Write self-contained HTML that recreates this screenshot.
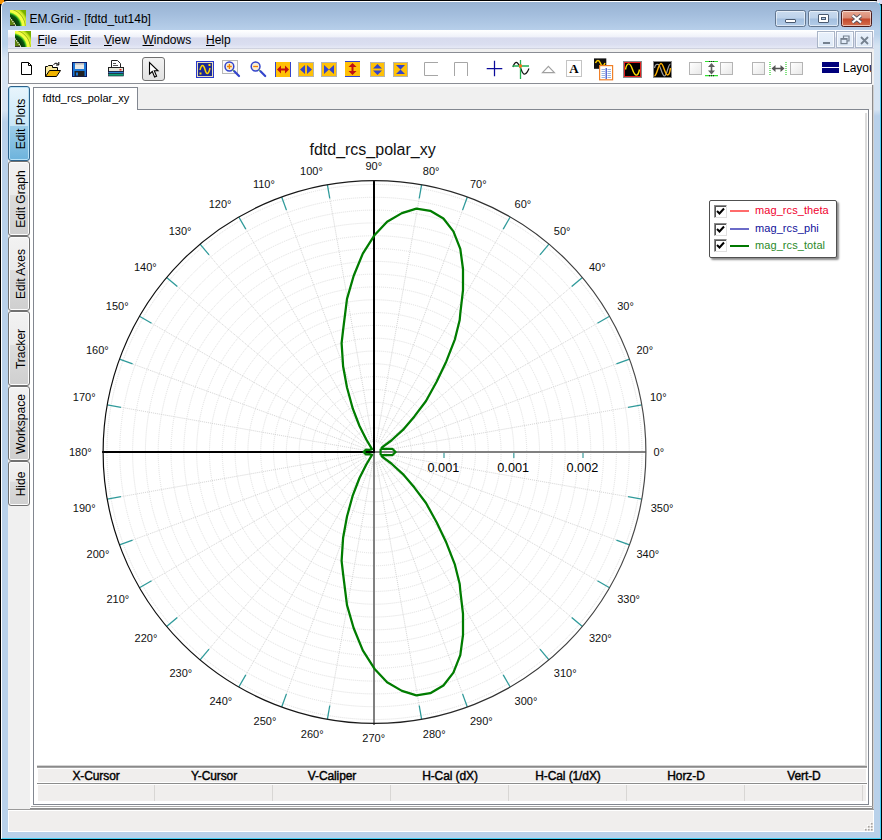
<!DOCTYPE html><html><head><meta charset="utf-8"><title>EM.Grid - [fdtd_tut14b]</title><style>
html,body{margin:0;padding:0}
body{width:882px;height:840px;position:relative;overflow:hidden;background:#000;font-family:"Liberation Sans",Arial,sans-serif;font-size:12px;color:#000}
div,span{box-sizing:border-box}
.abs{position:absolute}
#cnr1{position:absolute;left:0;top:0;width:4px;height:4px;background:#f59000}
#cnr2{position:absolute;left:877px;top:0;width:5px;height:4px;background:#dcdcf0}
#win{position:absolute;left:1px;top:1px;width:880px;height:838px;background:#b9d1ea;border-radius:6px 6px 0 0;overflow:hidden;border:1px solid #fff;border-right-color:#45d0f5;border-bottom-color:#45d0f5}
#tb{position:absolute;left:0;top:0;width:879px;height:28px;background:linear-gradient(#98b3d3,#a4bedd 45%,#b7cfea)}
#title{position:absolute;left:29.5px;top:12px;font-size:12px;line-height:14px;white-space:nowrap}
.wb{position:absolute;top:10px;height:17px;border:1px solid #62768f;border-radius:2.5px;background:linear-gradient(#c9dbef 0,#bdd2ea 48%,#a3bfdf 52%,#b3cce8);box-shadow:inset 0 0 0 1px rgba(255,255,255,.55)}
.wb.close{background:linear-gradient(#e8a893 0,#d98a74 48%,#c4472a 52%,#d4704f);border-color:#4a1c1c}
#menubar{position:absolute;left:8px;top:30px;width:866px;height:19px;background:linear-gradient(#ffffff 0,#fbfcfe 10%,#eff1f9 36%,#d8dbee 42%,#dadef0 75%,#e5e8f5 94%,#bfc2ce 100%)}
.mi{position:absolute;top:3px;font-size:12px;line-height:14px;white-space:nowrap}
.mi u{text-decoration:underline;text-underline-offset:1px}
.mb{position:absolute;top:1px;height:17px;width:18px;border:1px solid #a9b4c6;background:linear-gradient(#e9f1fb,#dde8f6);box-shadow:inset 0 0 0 1px rgba(255,255,255,.7)}
#client{position:absolute;left:8px;top:49px;width:866px;height:783px;background:#f0f0f0}
#toolbar{position:absolute;left:8px;top:52px;width:864px;height:32px;background:#fff;border:1px solid #8a8d94;overflow:hidden}
.ic{position:absolute}
.vt{position:absolute;left:8px;width:22px;border:1px solid #707070;border-radius:3px;background:linear-gradient(#f2f2f2 0,#ebebeb 45%,#dddddd 46%,#cfcfcf 100%);box-shadow:inset 0 0 0 1px #fcfcfc}
.vt.sel{border-color:#2c628b;background:linear-gradient(#e8f5fc 0,#c9e6f7 53%,#9ccde9 54%,#6db3dc 100%);box-shadow:inset 0 0 0 1px #b9e2f7}
.vt span{position:absolute;left:11.7px;top:50%;transform:translate(-50%,-50%) rotate(-90deg);white-space:nowrap;font-size:12px;line-height:14px}
#panel{position:absolute;left:33px;top:109px;width:836px;height:696px;background:#fff;border:1px solid #828790}
#dtab{position:absolute;left:33px;top:87px;width:105px;height:23px;background:#fff;border:1px solid #828790;border-bottom:none}
#dtab span{position:absolute;left:8.5px;top:4px;font-size:11px;line-height:13px;white-space:nowrap}
.legend{position:absolute;left:709px;top:200px;width:128px;height:58px;background:#fff;border:1.5px solid #505050;border-radius:2px;box-shadow:2px 2px 2px rgba(0,0,0,.45)}
.legend .cb{position:absolute;left:4px;width:13px;height:13px;border:1px solid #8a8a8a;border-right-color:#e0e0e0;border-bottom-color:#e0e0e0;background:#fff;box-shadow:inset 1px 1px 0 #555}
.legend .cb svg{position:absolute;left:0;top:0}
.legend .ln{position:absolute;left:20px;width:19px;height:2px}
.legend .lt{position:absolute;left:45px;letter-spacing:.08px;font-size:11px;line-height:13px;white-space:nowrap}
#tbl{position:absolute;left:37px;top:765px;width:829px;height:37px}
.th{position:absolute;top:3px;height:15px;width:118px;text-align:center;font-size:12px;line-height:15px;font-weight:normal;-webkit-text-stroke:0.4px #000;letter-spacing:-0.1px;white-space:nowrap}
#status{position:absolute;left:8px;top:809px;width:866px;height:23px;background:#f0eeed;border-top:1px solid #9a9a9a}
</style></head><body>
<div id="cnr1"></div><div id="cnr2"></div><div id="win"><div id="tb"></div></div>
<svg class="ic" style="left:10px;top:10px" width="16" height="16" viewBox="0 0 16 16"><defs><radialGradient id="g10" gradientUnits="userSpaceOnUse" cx="-3" cy="17" r="22"><stop offset="0" stop-color="#6a8c10"/><stop offset=".38" stop-color="#557a0c"/><stop offset=".42" stop-color="#073607"/><stop offset=".58" stop-color="#0a5a12"/><stop offset=".64" stop-color="#48c424"/><stop offset=".7" stop-color="#f2ff3c"/><stop offset=".79" stop-color="#f6ff48"/><stop offset=".83" stop-color="#a4bc18"/><stop offset=".87" stop-color="#dcf432"/><stop offset=".93" stop-color="#c0e020"/><stop offset="1" stop-color="#78b000"/></radialGradient></defs><rect width="16" height="16" fill="url(#g10)"/><path d="M0,7.5 L6,16" stroke="#f4f4e0" stroke-width="1.1" stroke-dasharray="1.3 0.9"/><path d="M0,15.5 H5" stroke="#3a3a30" stroke-width="1"/></svg>
<div id="title">EM.Grid - [fdtd_tut14b]</div>
<div class="wb" style="left:775px;width:31px"><div class="abs" style="left:9px;top:8px;width:11px;height:4px;background:#fff;border:1px solid #4a5a70;border-radius:1px"></div></div>
<div class="wb" style="left:808px;width:31px"><div class="abs" style="left:9px;top:3px;width:11px;height:9px;border:1px solid #4a5a70;background:#fff;border-radius:1px"><div class="abs" style="left:2px;top:2px;width:5px;height:3px;border:1px solid #4a5a70;background:#b4cce8"></div></div></div>
<div class="wb close" style="left:841px;width:31px"><svg class="abs" style="left:8px;top:2px" width="14" height="12" viewBox="0 0 14 12"><path d="M2.5,2.5 L11,9.5 M11,2.5 L2.5,9.5" stroke="#5a5560" stroke-width="4"/><path d="M2.5,2.5 L11,9.5 M11,2.5 L2.5,9.5" stroke="#fff" stroke-width="2.2"/></svg></div>
<div id="menubar"></div>
<svg class="ic" style="left:15px;top:31px" width="16" height="16" viewBox="0 0 16 16"><defs><radialGradient id="g15" gradientUnits="userSpaceOnUse" cx="-3" cy="17" r="22"><stop offset="0" stop-color="#6a8c10"/><stop offset=".38" stop-color="#557a0c"/><stop offset=".42" stop-color="#073607"/><stop offset=".58" stop-color="#0a5a12"/><stop offset=".64" stop-color="#48c424"/><stop offset=".7" stop-color="#f2ff3c"/><stop offset=".79" stop-color="#f6ff48"/><stop offset=".83" stop-color="#a4bc18"/><stop offset=".87" stop-color="#dcf432"/><stop offset=".93" stop-color="#c0e020"/><stop offset="1" stop-color="#78b000"/></radialGradient></defs><rect width="16" height="16" fill="url(#g15)"/><path d="M0,7.5 L6,16" stroke="#f4f4e0" stroke-width="1.1" stroke-dasharray="1.3 0.9"/><path d="M0,15.5 H5" stroke="#3a3a30" stroke-width="1"/></svg>
<div class="mi" style="left:37.5px;top:33px"><u>F</u>ile</div>
<div class="mi" style="left:70px;top:33px"><u>E</u>dit</div>
<div class="mi" style="left:104px;top:33px"><u>V</u>iew</div>
<div class="mi" style="left:142.5px;top:33px"><u>W</u>indows</div>
<div class="mi" style="left:206px;top:33px"><u>H</u>elp</div>
<div class="mb" style="left:817px;top:31px"><div class="abs" style="left:5px;top:10px;width:7px;height:2px;background:#75818f"></div></div>
<div class="mb" style="left:836px;top:31px"><svg class="abs" style="left:3px;top:3px" width="10" height="10" viewBox="0 0 10 10"><path d="M3.5,3 V1 H9 V6 H7" fill="none" stroke="#75818f" stroke-width="1.2"/><rect x="1" y="3.6" width="6" height="5" fill="none" stroke="#75818f" stroke-width="1.2"/><path d="M1,4 H7" stroke="#75818f" stroke-width="1.6"/></svg></div>
<div class="mb" style="left:855px;top:31px"><svg class="abs" style="left:4px;top:4px" width="9" height="9" viewBox="0 0 9 9"><path d="M1,1 L8,8 M8,1 L1,8" stroke="#75818f" stroke-width="1.8"/></svg></div>
<div class="abs" style="left:2px;top:44px;width:6px;height:78px;background:linear-gradient(rgba(255,255,255,0),rgba(255,255,255,.42) 18%,rgba(255,255,255,.42) 85%,rgba(255,255,255,0))"></div>
<div class="abs" style="left:874px;top:34px;width:6px;height:82px;background:linear-gradient(rgba(255,255,255,0),rgba(255,255,255,.42) 15%,rgba(255,255,255,.42) 92%,rgba(255,255,255,0))"></div>
<div id="client"></div>
<div id="toolbar"></div>
<svg class="ic" style="left:20px;top:61px" width="14" height="16" viewBox="0 0 14 16"><path d="M1.5,1.5 H8.5 L11.5,4.5 V13.5 H1.5 Z" fill="#fff" stroke="#000" stroke-width="1"/><path d="M8.5,1.5 V4.5 H11.5" fill="none" stroke="#000" stroke-width="1"/></svg>
<svg class="ic" style="left:44px;top:60px" width="18" height="18" viewBox="0 0 18 18"><path d="M1.5,16.5 V6.5 H3.5 L4.5,5.5 H8.5 V7.5 H13.5 V10.5" fill="#f7e9a0" stroke="#000" stroke-width="1"/><path d="M1.5,16.5 L5.5,10.5 H16.5 L12.5,16.5 Z" fill="#f0b400" stroke="#000" stroke-width="1"/><path d="M9.5,4.5 Q12,1.5 14.5,4.5 M14.8,2 V5 H12" fill="none" stroke="#000" stroke-width="1"/></svg>
<svg class="ic" style="left:72px;top:62px" width="15" height="15" viewBox="0 0 15 15"><rect x="0.5" y="0.5" width="14" height="14" fill="#1d78d8" stroke="#0a1a66" stroke-width="1"/><rect x="3" y="1" width="9" height="6" fill="#e8e8e8"/><rect x="3" y="1" width="9" height="1.6" fill="#bbb"/><rect x="2.5" y="9" width="10" height="5.5" fill="#222"/><rect x="4" y="10.5" width="2" height="3" fill="#1d78d8"/></svg>
<svg class="ic" style="left:107px;top:59px" width="18" height="19" viewBox="0 0 18 19"><path d="M4.5,8 V1.5 H10.5 L13.5,4.5 V8" fill="#fff" stroke="#222" stroke-width="1"/><path d="M6,4.5 H9 M6,6.5 H11" stroke="#555" stroke-width="1"/><rect x="1.5" y="8.5" width="15" height="4" fill="#e6e6d8" stroke="#222"/><rect x="1.5" y="12.5" width="15" height="2" fill="#2a7fd0" stroke="#113" stroke-width=".6"/><rect x="1.5" y="14.5" width="15" height="2.5" fill="#10a070" stroke="#113" stroke-width=".6"/><rect x="12.5" y="10" width="2" height="1.5" fill="#d22"/></svg>
<div class="abs" style="left:142px;top:57px;width:23px;height:24px;border:1px solid #707070;border-radius:3px;background:linear-gradient(#f2f2f2,#e2e2e2)"></div>
<svg class="ic" style="left:148px;top:61px" width="12" height="18" viewBox="0 0 12 18"><path d="M1.5,1.5 V13 L4.3,10.5 L6.6,16 L8.6,15.2 L6.3,9.8 H10 Z" fill="#fff" stroke="#000" stroke-width="1.1" stroke-linejoin="miter"/></svg>
<svg class="ic" style="left:196px;top:61px" width="18" height="17" viewBox="0 0 18 17"><rect x="0.5" y="0.5" width="17" height="16" fill="#1c2a98" stroke="#2a3acc" stroke-width="1"/><rect x="1.5" y="1.5" width="15" height="14" fill="none" stroke="#e8e0b8" stroke-width="1"/><path d="M4,9 C5.5,3 7.5,3 9,8.5 S12.5,14 14,7" fill="none" stroke="#ffd800" stroke-width="1.5"/><rect x="12.5" y="3" width="2" height="2" fill="#ffd800"/><rect x="3.5" y="11.5" width="2" height="2" fill="#ffd800"/></svg>
<svg class="ic" style="left:222px;top:60px" width="19" height="18" viewBox="0 0 19 18"><rect x="0.5" y="0.5" width="15" height="13" fill="#fafafa" stroke="#b8b8b8"/><circle cx="7.4" cy="6.5" r="4.4" fill="#f8eed4" stroke="#3344cc" stroke-width="1.5"/><path d="M5,6.5 H9.8 M7.4,4.1 V8.9" stroke="#f08000" stroke-width="1.3"/><path d="M11,10 L12.5,11.5" stroke="#70c040" stroke-width="1.6"/><path d="M12.3,11.3 L17,16" stroke="#3344cc" stroke-width="2.2" stroke-linecap="round"/></svg>
<svg class="ic" style="left:249px;top:60px" width="19" height="18" viewBox="0 0 19 18"><circle cx="6.6" cy="6.5" r="4.4" fill="#f8eed4" stroke="#3344cc" stroke-width="1.5"/><path d="M4.2,6.5 H9" stroke="#f08000" stroke-width="1.3"/><path d="M10.2,10 L11.7,11.5" stroke="#70c040" stroke-width="1.6"/><path d="M11.5,11.3 L16.2,16" stroke="#3344cc" stroke-width="2.2" stroke-linecap="round"/></svg>
<svg class="ic" style="left:275px;top:62px" width="16" height="15" viewBox="0 0 16 15"><rect x="0" y="0" width="16" height="15" fill="#ffc107"/><path d="M0.5,0 V15 M15.5,0 V15" stroke="#3344cc" stroke-width="1"/><path d="M2,7.5 L6,3.5 V6.5 H10 V3.5 L14,7.5 L10,11.5 V8.5 H6 V11.5 Z" fill="#c01010"/></svg>
<svg class="ic" style="left:298px;top:62px" width="16" height="15" viewBox="0 0 16 15"><rect x="0.5" y="0.5" width="15" height="14" fill="#ffc107" stroke="#b4b4b4" stroke-width="1"/><path d="M7,3 V12 L2,7.5 Z M9,3 V12 L14,7.5 Z" fill="#3344cc"/></svg>
<svg class="ic" style="left:321px;top:62px" width="16" height="15" viewBox="0 0 16 15"><rect x="0.5" y="0.5" width="15" height="14" fill="#ffc107" stroke="#b4b4b4" stroke-width="1"/><path d="M3,3 L8,7.5 L3,12 Z M13,3 L8,7.5 L13,12 Z" fill="#3344cc"/></svg>
<svg class="ic" style="left:345px;top:61px" width="15" height="16" viewBox="0 0 15 16"><rect x="0" y="0" width="15" height="16" fill="#ffc107"/><path d="M0,0.5 H15 M0,15.5 H15" stroke="#3344cc" stroke-width="1"/><path d="M7.5,2 L11.5,6 H8.5 V10 H11.5 L7.5,14 L3.5,10 H6.5 V6 H3.5 Z" fill="#c01010"/></svg>
<svg class="ic" style="left:370px;top:62px" width="15" height="15" viewBox="0 0 15 15"><rect x="0.5" y="0.5" width="14" height="14" fill="#ffc107" stroke="#b4b4b4" stroke-width="1"/><path d="M3,6.5 H12 L7.5,2 Z M3,8.5 H12 L7.5,13 Z" fill="#3344cc"/></svg>
<svg class="ic" style="left:393px;top:62px" width="15" height="15" viewBox="0 0 15 15"><rect x="0.5" y="0.5" width="14" height="14" fill="#ffc107" stroke="#b4b4b4" stroke-width="1"/><path d="M3,3 H12 L7.5,7.5 Z M3,12 H12 L7.5,7.5 Z" fill="#3344cc"/></svg>
<svg class="ic" style="left:424px;top:62px" width="15" height="15" viewBox="0 0 15 15"><path d="M14,0.5 H0.5 V13.5 H14" fill="none" stroke="#a6a6a6" stroke-width="1"/></svg>
<svg class="ic" style="left:454px;top:62px" width="15" height="15" viewBox="0 0 15 15"><path d="M0.5,14 V0.5 H13.5 V14" fill="none" stroke="#a6a6a6" stroke-width="1"/></svg>
<svg class="ic" style="left:486px;top:60px" width="17" height="17" viewBox="0 0 17 17"><path d="M0.7,8.5 H16.3 M8.5,0.7 V16.3" stroke="#0a0a9a" stroke-width="1.25"/></svg>
<svg class="ic" style="left:512px;top:59px" width="18" height="21" viewBox="0 0 18 21"><path d="M1,8 C2,4 4,2.5 5.5,4 C7,5.5 8,7 9,10 C10,13 11.5,15.5 13,15 C14.5,14.5 16,12 17,9.5" fill="none" stroke="#111" stroke-width="1.2"/><path d="M8.5,1 V20 M0.5,7 H17" stroke="#22b050" stroke-width="1.3"/><rect x="7" y="5.5" width="3" height="3" fill="#f07818"/></svg>
<svg class="ic" style="left:541px;top:65px" width="15" height="9" viewBox="0 0 15 9"><path d="M1.5,7.7 L7.4,1.3 L13.4,7.7 Z" fill="#fff" stroke="#a0a0a0" stroke-width="1.2"/></svg>
<div class="abs" style="left:566px;top:60px;width:16px;height:17px;border:1px solid #c4c4c4;background:#fff;font-family:'Liberation Serif',serif;font-weight:bold;font-size:13px;line-height:15px;text-align:center">A</div>
<svg class="ic" style="left:594px;top:58px" width="20" height="23" viewBox="0 0 20 23"><rect x="0" y="0.4" width="12.3" height="10.4" fill="#111"/><path d="M1.5,5 C3,1.5 5,1.5 6.3,5 S9.5,9 11,5" fill="none" stroke="#ffd000" stroke-width="1.5"/><rect x="5.6" y="7.6" width="13" height="14.2" fill="#fff" stroke="#f08028" stroke-width="1.2"/><path d="M7.5,11.5 H11 M7.5,13.5 H11 M7.5,15.5 H11 M7.5,17.5 H11 M7.5,19.5 H11 M13.5,11.5 H17 M13.5,13.5 H17 M13.5,15.5 H17 M13.5,17.5 H17 M13.5,19.5 H17" stroke="#9ab4e0" stroke-width="1"/><path d="M12.2,10 V21" stroke="#3344cc" stroke-width="1.2"/></svg>
<svg class="ic" style="left:623px;top:61px" width="19" height="17" viewBox="0 0 19 17"><rect x="0.5" y="0.5" width="18" height="16" fill="#000" stroke="#8a8a8a" stroke-width="1"/><rect x="1.5" y="1.5" width="16" height="14" fill="#000" stroke="#e02020" stroke-width="1"/><path d="M2.5,8.5 C4,1 7,1 9.5,8.5 S15,16 16.5,8.5" fill="none" stroke="#ffe000" stroke-width="1.4"/></svg>
<svg class="ic" style="left:653px;top:61px" width="19" height="17" viewBox="0 0 19 17"><rect x="0.5" y="0.5" width="18" height="16" fill="#000" stroke="#8a8a8a" stroke-width="1"/><path d="M1.5,7 C2.5,3 4,3 5.5,3.5 C7.5,4.5 9,15 11.5,15 S15,3 17.5,3" fill="none" stroke="#a0a0a0" stroke-width="1.2"/><path d="M1.5,15 C4,14 5.5,2.5 8,2.5 S12,14 14.5,14 S17,9 17.5,7" fill="none" stroke="#ffb000" stroke-width="1.4"/></svg>
<div class="abs" style="left:689px;top:62px;width:13px;height:13px;border:1px solid #b4b4b4;background:linear-gradient(135deg,#fff,#e8e8e8)"></div>
<div class="abs" style="left:720px;top:62px;width:13px;height:13px;border:1px solid #b4b4b4;background:linear-gradient(135deg,#fff,#e8e8e8)"></div>
<div class="abs" style="left:752px;top:62px;width:13px;height:13px;border:1px solid #b4b4b4;background:linear-gradient(135deg,#fff,#e8e8e8)"></div>
<div class="abs" style="left:790px;top:62px;width:13px;height:13px;border:1px solid #b4b4b4;background:linear-gradient(135deg,#fff,#e8e8e8)"></div>
<svg class="ic" style="left:705px;top:60px" width="13" height="17" viewBox="0 0 13 17"><path d="M0,1.5 H13 M0,15.7 H13" stroke="#30e030" stroke-width="1.2"/><path d="M4,1.5 H9 M4,15.7 H9" stroke="#222" stroke-width="1.2" stroke-dasharray="1 1"/><path d="M6.5,3 L10,7 H7.3 V10.5 H10 L6.5,14.5 L3,10.5 H5.7 V7 H3 Z" fill="#606060"/></svg>
<svg class="ic" style="left:769px;top:61px" width="18" height="15" viewBox="0 0 18 15"><path d="M1,1 V14 M17,1 V14" stroke="#30d030" stroke-width="1.2" stroke-dasharray="1 1"/><path d="M2.5,7.5 L6.5,4 V6.8 H11.5 V4 L15.5,7.5 L11.5,11 V8.2 H6.5 V11 Z" fill="#555"/></svg>
<div class="abs" style="left:822px;top:62px;width:17px;height:5px;background:#00007c"></div>
<div class="abs" style="left:822px;top:68px;width:17px;height:5px;background:#00007c"></div>
<div class="abs" style="left:843px;top:61px;width:28px;overflow:hidden;white-space:nowrap;font-size:12px;line-height:14px">Layout</div>
<div class="abs" style="left:30px;top:86px;width:842px;height:722px;background:#fff"></div>
<div class="abs" style="left:30px;top:84px;width:844px;height:26px;background:#f0f0f0"></div>
<div class="abs" style="left:8px;top:84px;width:864px;height:3px;background:#fbfbfb"></div>
<div class="abs" style="left:872px;top:85px;width:1px;height:724px;background:#8c8c8c"></div>
<div class="abs" style="left:873px;top:85px;width:1px;height:724px;background:#d0d0d0"></div>
<div class="vt sel" style="top:86px;height:75px"><span>Edit Plots</span></div>
<div class="vt" style="top:161px;height:75px"><span>Edit Graph</span></div>
<div class="vt" style="top:236px;height:75px"><span>Edit Axes</span></div>
<div class="vt" style="top:311px;height:75px"><span>Tracker</span></div>
<div class="vt" style="top:386px;height:75px"><span>Workspace</span></div>
<div class="vt" style="top:461px;height:45px"><span>Hide</span></div>
<div class="abs" style="left:30px;top:86px;width:3px;height:722px;background:#fff"></div>
<div id="panel"></div>
<div id="dtab"><span>fdtd_rcs_polar_xy</span></div>
<div class="abs" style="left:865px;top:113px;width:2px;height:652px;background:#dcdcdc"></div>
<svg class="plot" width="882" height="840" viewBox="0 0 882 840" style="position:absolute;left:0;top:0;font-family:'Liberation Sans',Arial,sans-serif">
<defs><linearGradient id="cg" gradientUnits="userSpaceOnUse" x1="103" y1="0" x2="646" y2="0"><stop offset="0" stop-color="#0c0c0c"/><stop offset=".5" stop-color="#1c1c1c"/><stop offset="1" stop-color="#4c4c4c"/></linearGradient></defs>
<circle cx="374.5" cy="452.0" r="11.31" fill="none" stroke="#dfdfdf" stroke-width="1" stroke-dasharray="1 1"/>
<circle cx="374.5" cy="452.0" r="24.12" fill="none" stroke="#dfdfdf" stroke-width="1" stroke-dasharray="1 1"/>
<circle cx="374.5" cy="452.0" r="36.93" fill="none" stroke="#dfdfdf" stroke-width="1" stroke-dasharray="1 1"/>
<circle cx="374.5" cy="452.0" r="49.74" fill="none" stroke="#dfdfdf" stroke-width="1" stroke-dasharray="1 1"/>
<circle cx="374.5" cy="452.0" r="62.55" fill="none" stroke="#dfdfdf" stroke-width="1" stroke-dasharray="1 1"/>
<circle cx="374.5" cy="452.0" r="75.36" fill="none" stroke="#dfdfdf" stroke-width="1" stroke-dasharray="1 1"/>
<circle cx="374.5" cy="452.0" r="88.17" fill="none" stroke="#dfdfdf" stroke-width="1" stroke-dasharray="1 1"/>
<circle cx="374.5" cy="452.0" r="100.98" fill="none" stroke="#dfdfdf" stroke-width="1" stroke-dasharray="1 1"/>
<circle cx="374.5" cy="452.0" r="113.79" fill="none" stroke="#dfdfdf" stroke-width="1" stroke-dasharray="1 1"/>
<circle cx="374.5" cy="452.0" r="126.60" fill="none" stroke="#dfdfdf" stroke-width="1" stroke-dasharray="1 1"/>
<circle cx="374.5" cy="452.0" r="139.41" fill="none" stroke="#dfdfdf" stroke-width="1" stroke-dasharray="1 1"/>
<circle cx="374.5" cy="452.0" r="152.22" fill="none" stroke="#dfdfdf" stroke-width="1" stroke-dasharray="1 1"/>
<circle cx="374.5" cy="452.0" r="165.03" fill="none" stroke="#dfdfdf" stroke-width="1" stroke-dasharray="1 1"/>
<circle cx="374.5" cy="452.0" r="177.84" fill="none" stroke="#dfdfdf" stroke-width="1" stroke-dasharray="1 1"/>
<circle cx="374.5" cy="452.0" r="190.65" fill="none" stroke="#dfdfdf" stroke-width="1" stroke-dasharray="1 1"/>
<circle cx="374.5" cy="452.0" r="203.46" fill="none" stroke="#dfdfdf" stroke-width="1" stroke-dasharray="1 1"/>
<circle cx="374.5" cy="452.0" r="216.27" fill="none" stroke="#dfdfdf" stroke-width="1" stroke-dasharray="1 1"/>
<circle cx="374.5" cy="452.0" r="229.08" fill="none" stroke="#dfdfdf" stroke-width="1" stroke-dasharray="1 1"/>
<circle cx="374.5" cy="452.0" r="241.89" fill="none" stroke="#dfdfdf" stroke-width="1" stroke-dasharray="1 1"/>
<circle cx="374.5" cy="452.0" r="254.70" fill="none" stroke="#dfdfdf" stroke-width="1" stroke-dasharray="1 1"/>
<circle cx="374.5" cy="452.0" r="267.51" fill="none" stroke="#dfdfdf" stroke-width="1" stroke-dasharray="1 1"/>
<line x1="384.35" y1="450.26" x2="627.99" y2="407.30" stroke="#d4d4d4" stroke-width="1" stroke-dasharray="1 1"/>
<line x1="383.90" y1="448.58" x2="616.38" y2="363.96" stroke="#d4d4d4" stroke-width="1" stroke-dasharray="1 1"/>
<line x1="383.16" y1="447.00" x2="597.41" y2="323.30" stroke="#d4d4d4" stroke-width="1" stroke-dasharray="1 1"/>
<line x1="382.16" y1="445.57" x2="571.68" y2="286.55" stroke="#d4d4d4" stroke-width="1" stroke-dasharray="1 1"/>
<line x1="380.93" y1="444.34" x2="539.95" y2="254.82" stroke="#d4d4d4" stroke-width="1" stroke-dasharray="1 1"/>
<line x1="379.50" y1="443.34" x2="503.20" y2="229.09" stroke="#d4d4d4" stroke-width="1" stroke-dasharray="1 1"/>
<line x1="377.92" y1="442.60" x2="462.54" y2="210.12" stroke="#d4d4d4" stroke-width="1" stroke-dasharray="1 1"/>
<line x1="376.24" y1="442.15" x2="419.20" y2="198.51" stroke="#d4d4d4" stroke-width="1" stroke-dasharray="1 1"/>
<line x1="372.76" y1="442.15" x2="329.80" y2="198.51" stroke="#d4d4d4" stroke-width="1" stroke-dasharray="1 1"/>
<line x1="371.08" y1="442.60" x2="286.46" y2="210.12" stroke="#d4d4d4" stroke-width="1" stroke-dasharray="1 1"/>
<line x1="369.50" y1="443.34" x2="245.80" y2="229.09" stroke="#d4d4d4" stroke-width="1" stroke-dasharray="1 1"/>
<line x1="368.07" y1="444.34" x2="209.05" y2="254.82" stroke="#d4d4d4" stroke-width="1" stroke-dasharray="1 1"/>
<line x1="366.84" y1="445.57" x2="177.32" y2="286.55" stroke="#d4d4d4" stroke-width="1" stroke-dasharray="1 1"/>
<line x1="365.84" y1="447.00" x2="151.59" y2="323.30" stroke="#d4d4d4" stroke-width="1" stroke-dasharray="1 1"/>
<line x1="365.10" y1="448.58" x2="132.62" y2="363.96" stroke="#d4d4d4" stroke-width="1" stroke-dasharray="1 1"/>
<line x1="364.65" y1="450.26" x2="121.01" y2="407.30" stroke="#d4d4d4" stroke-width="1" stroke-dasharray="1 1"/>
<line x1="364.65" y1="453.74" x2="121.01" y2="496.70" stroke="#d4d4d4" stroke-width="1" stroke-dasharray="1 1"/>
<line x1="365.10" y1="455.42" x2="132.62" y2="540.04" stroke="#d4d4d4" stroke-width="1" stroke-dasharray="1 1"/>
<line x1="365.84" y1="457.00" x2="151.59" y2="580.70" stroke="#d4d4d4" stroke-width="1" stroke-dasharray="1 1"/>
<line x1="366.84" y1="458.43" x2="177.32" y2="617.45" stroke="#d4d4d4" stroke-width="1" stroke-dasharray="1 1"/>
<line x1="368.07" y1="459.66" x2="209.05" y2="649.18" stroke="#d4d4d4" stroke-width="1" stroke-dasharray="1 1"/>
<line x1="369.50" y1="460.66" x2="245.80" y2="674.91" stroke="#d4d4d4" stroke-width="1" stroke-dasharray="1 1"/>
<line x1="371.08" y1="461.40" x2="286.46" y2="693.88" stroke="#d4d4d4" stroke-width="1" stroke-dasharray="1 1"/>
<line x1="372.76" y1="461.85" x2="329.80" y2="705.49" stroke="#d4d4d4" stroke-width="1" stroke-dasharray="1 1"/>
<line x1="376.24" y1="461.85" x2="419.20" y2="705.49" stroke="#d4d4d4" stroke-width="1" stroke-dasharray="1 1"/>
<line x1="377.92" y1="461.40" x2="462.54" y2="693.88" stroke="#d4d4d4" stroke-width="1" stroke-dasharray="1 1"/>
<line x1="379.50" y1="460.66" x2="503.20" y2="674.91" stroke="#d4d4d4" stroke-width="1" stroke-dasharray="1 1"/>
<line x1="380.93" y1="459.66" x2="539.95" y2="649.18" stroke="#d4d4d4" stroke-width="1" stroke-dasharray="1 1"/>
<line x1="382.16" y1="458.43" x2="571.68" y2="617.45" stroke="#d4d4d4" stroke-width="1" stroke-dasharray="1 1"/>
<line x1="383.16" y1="457.00" x2="597.41" y2="580.70" stroke="#d4d4d4" stroke-width="1" stroke-dasharray="1 1"/>
<line x1="383.90" y1="455.42" x2="616.38" y2="540.04" stroke="#d4d4d4" stroke-width="1" stroke-dasharray="1 1"/>
<line x1="384.35" y1="453.74" x2="627.99" y2="496.70" stroke="#d4d4d4" stroke-width="1" stroke-dasharray="1 1"/>
<line x1="641.78" y1="404.87" x2="627.99" y2="407.30" stroke="#2f9a9a" stroke-width="1.3"/>
<line x1="629.53" y1="359.18" x2="616.38" y2="363.96" stroke="#2f9a9a" stroke-width="1.3"/>
<line x1="609.54" y1="316.30" x2="597.41" y2="323.30" stroke="#2f9a9a" stroke-width="1.3"/>
<line x1="582.40" y1="277.55" x2="571.68" y2="286.55" stroke="#2f9a9a" stroke-width="1.3"/>
<line x1="548.95" y1="244.10" x2="539.95" y2="254.82" stroke="#2f9a9a" stroke-width="1.3"/>
<line x1="510.20" y1="216.96" x2="503.20" y2="229.09" stroke="#2f9a9a" stroke-width="1.3"/>
<line x1="467.32" y1="196.97" x2="462.54" y2="210.12" stroke="#2f9a9a" stroke-width="1.3"/>
<line x1="421.63" y1="184.72" x2="419.20" y2="198.51" stroke="#2f9a9a" stroke-width="1.3"/>
<line x1="327.37" y1="184.72" x2="329.80" y2="198.51" stroke="#2f9a9a" stroke-width="1.3"/>
<line x1="281.68" y1="196.97" x2="286.46" y2="210.12" stroke="#2f9a9a" stroke-width="1.3"/>
<line x1="238.80" y1="216.96" x2="245.80" y2="229.09" stroke="#2f9a9a" stroke-width="1.3"/>
<line x1="200.05" y1="244.10" x2="209.05" y2="254.82" stroke="#2f9a9a" stroke-width="1.3"/>
<line x1="166.60" y1="277.55" x2="177.32" y2="286.55" stroke="#2f9a9a" stroke-width="1.3"/>
<line x1="139.46" y1="316.30" x2="151.59" y2="323.30" stroke="#2f9a9a" stroke-width="1.3"/>
<line x1="119.47" y1="359.18" x2="132.62" y2="363.96" stroke="#2f9a9a" stroke-width="1.3"/>
<line x1="107.22" y1="404.87" x2="121.01" y2="407.30" stroke="#2f9a9a" stroke-width="1.3"/>
<line x1="107.22" y1="499.13" x2="121.01" y2="496.70" stroke="#2f9a9a" stroke-width="1.3"/>
<line x1="119.47" y1="544.82" x2="132.62" y2="540.04" stroke="#2f9a9a" stroke-width="1.3"/>
<line x1="139.46" y1="587.70" x2="151.59" y2="580.70" stroke="#2f9a9a" stroke-width="1.3"/>
<line x1="166.60" y1="626.45" x2="177.32" y2="617.45" stroke="#2f9a9a" stroke-width="1.3"/>
<line x1="200.05" y1="659.90" x2="209.05" y2="649.18" stroke="#2f9a9a" stroke-width="1.3"/>
<line x1="238.80" y1="687.04" x2="245.80" y2="674.91" stroke="#2f9a9a" stroke-width="1.3"/>
<line x1="281.68" y1="707.03" x2="286.46" y2="693.88" stroke="#2f9a9a" stroke-width="1.3"/>
<line x1="327.37" y1="719.28" x2="329.80" y2="705.49" stroke="#2f9a9a" stroke-width="1.3"/>
<line x1="421.63" y1="719.28" x2="419.20" y2="705.49" stroke="#2f9a9a" stroke-width="1.3"/>
<line x1="467.32" y1="707.03" x2="462.54" y2="693.88" stroke="#2f9a9a" stroke-width="1.3"/>
<line x1="510.20" y1="687.04" x2="503.20" y2="674.91" stroke="#2f9a9a" stroke-width="1.3"/>
<line x1="548.95" y1="659.90" x2="539.95" y2="649.18" stroke="#2f9a9a" stroke-width="1.3"/>
<line x1="582.40" y1="626.45" x2="571.68" y2="617.45" stroke="#2f9a9a" stroke-width="1.3"/>
<line x1="609.54" y1="587.70" x2="597.41" y2="580.70" stroke="#2f9a9a" stroke-width="1.3"/>
<line x1="629.53" y1="544.82" x2="616.38" y2="540.04" stroke="#2f9a9a" stroke-width="1.3"/>
<line x1="641.78" y1="499.13" x2="627.99" y2="496.70" stroke="#2f9a9a" stroke-width="1.3"/>
<line x1="374.5" y1="452.0" x2="645.9" y2="452.0" stroke="#808080" stroke-width="2"/>
<line x1="374.0" y1="452.0" x2="374.0" y2="724.9" stroke="#808080" stroke-width="2"/>
<line x1="102.10000000000002" y1="452.0" x2="375.0" y2="452.0" stroke="#000" stroke-width="2"/>
<line x1="374.0" y1="180.60000000000002" x2="374.0" y2="453.0" stroke="#000" stroke-width="2"/>
<line x1="444.0" y1="453.0" x2="444.0" y2="458.0" stroke="#55aaaa" stroke-width="1.4"/>
<text x="443.4" y="472.4" font-size="12.7" text-anchor="middle" fill="#000">0.001</text>
<line x1="513.8" y1="453.0" x2="513.8" y2="458.0" stroke="#55aaaa" stroke-width="1.4"/>
<text x="513.1999999999999" y="472.4" font-size="12.7" text-anchor="middle" fill="#000">0.001</text>
<line x1="583.0" y1="453.0" x2="583.0" y2="458.0" stroke="#55aaaa" stroke-width="1.4"/>
<text x="582.4" y="472.4" font-size="12.7" text-anchor="middle" fill="#000">0.002</text>
<circle cx="374.5" cy="452.0" r="271.4" fill="none" stroke="url(#cg)" stroke-width="1.2"/>
<path d="M395.6,452.0 L392.3,448.8 L381.5,448.8 L381.7,447.6 L391.3,440.5 L402.9,429.9 L414.4,416.4 L426.0,401.0 L436.6,381.7 L446.3,361.4 L454.9,339.3 L459.7,320.0 L460.3,313.4 L463.0,290.2 L463.0,269.0 L460.3,248.8 L453.4,231.4 L443.4,218.5 L430.3,210.8 L416.4,208.7 L401.9,213.1 L387.1,221.8 L374.4,235.3 L362.8,253.6 L353.7,275.8 L347.0,298.9 L343.1,330.0 L341.6,343.1 L343.1,366.3 L347.0,387.5 L352.8,408.7 L359.5,426.0 L366.3,439.5 L372.0,449.1 L369.5,449.9 L366.0,449.6 L363.6,452.0 L366.0,454.4 L369.5,454.1 L372.0,454.9 L366.3,464.5 L359.5,478.0 L352.8,495.3 L347.0,516.5 L343.1,537.7 L341.6,560.9 L343.1,574.0 L347.0,605.1 L353.7,628.2 L362.8,650.4 L374.4,668.7 L387.1,682.2 L401.9,690.9 L416.4,695.3 L430.3,693.2 L443.4,685.5 L453.4,672.6 L460.3,655.2 L463.0,635.0 L463.0,613.8 L460.3,590.6 L459.7,584.0 L454.9,564.7 L446.3,542.6 L436.6,522.3 L426.0,503.0 L414.4,487.6 L402.9,474.1 L391.3,463.5 L381.7,456.4 L381.5,455.2 L392.3,455.2 Z" fill="none" stroke="#007c00" stroke-width="2.25" stroke-linejoin="round"/>
<path d="M380.6,448.8 V455.2" stroke="#007c00" stroke-width="2.2" fill="none"/>
<text x="372.6" y="155" font-size="16" text-anchor="middle" fill="#111">fdtd_rcs_polar_xy</text>
<text x="653.6" y="456.0" font-size="11" fill="#111">0°</text>
<text x="650.0" y="401.0" font-size="11" fill="#111">10°</text>
<text x="636.4" y="354.2" font-size="11" fill="#111">20°</text>
<text x="617.2" y="310.1" font-size="11" fill="#111">30°</text>
<text x="589.0" y="270.6" font-size="11" fill="#111">40°</text>
<text x="553.8" y="235.4" font-size="11" fill="#111">50°</text>
<text x="514.6" y="207.5" font-size="11" fill="#111">60°</text>
<text x="470.0" y="187.5" font-size="11" fill="#111">70°</text>
<text x="422.8" y="174.5" font-size="11" fill="#111">80°</text>
<text x="365.4" y="170.1" font-size="11" fill="#111">90°</text>
<text x="300.1" y="174.5" font-size="11" fill="#111">100°</text>
<text x="252.9" y="187.5" font-size="11" fill="#111">110°</text>
<text x="208.7" y="207.5" font-size="11" fill="#111">120°</text>
<text x="168.7" y="235.4" font-size="11" fill="#111">130°</text>
<text x="133.9" y="270.6" font-size="11" fill="#111">140°</text>
<text x="105.8" y="310.1" font-size="11" fill="#111">150°</text>
<text x="85.9" y="354.2" font-size="11" fill="#111">160°</text>
<text x="72.8" y="401.0" font-size="11" fill="#111">170°</text>
<text x="69.0" y="456.0" font-size="11" fill="#111">180°</text>
<text x="72.8" y="511.6" font-size="11" fill="#111">190°</text>
<text x="86.6" y="558.4" font-size="11" fill="#111">200°</text>
<text x="106.5" y="602.5" font-size="11" fill="#111">210°</text>
<text x="134.6" y="642.0" font-size="11" fill="#111">220°</text>
<text x="169.4" y="677.2" font-size="11" fill="#111">230°</text>
<text x="209.4" y="705.1" font-size="11" fill="#111">240°</text>
<text x="253.6" y="725.1" font-size="11" fill="#111">250°</text>
<text x="300.8" y="738.1" font-size="11" fill="#111">260°</text>
<text x="362.3" y="742.4" font-size="11" fill="#111">270°</text>
<text x="422.8" y="738.1" font-size="11" fill="#111">280°</text>
<text x="470.0" y="725.1" font-size="11" fill="#111">290°</text>
<text x="514.6" y="705.1" font-size="11" fill="#111">300°</text>
<text x="553.8" y="677.2" font-size="11" fill="#111">310°</text>
<text x="589.0" y="642.0" font-size="11" fill="#111">320°</text>
<text x="617.2" y="602.5" font-size="11" fill="#111">330°</text>
<text x="636.4" y="558.4" font-size="11" fill="#111">340°</text>
<text x="650.7" y="511.6" font-size="11" fill="#111">350°</text>
</svg>
<div class="legend">
<span class="cb" style="top:3.8px"><svg width="11" height="11" viewBox="0 0 11 11"><path d="M2,5 L4.5,7.5 L9,2.5" fill="none" stroke="#000" stroke-width="2"/></svg></span>
<span class="ln" style="top:9.3px;background:#ff6b6b"></span>
<span class="lt" style="top:3.3px;color:#f0002e">mag_rcs_theta</span>
<span class="cb" style="top:21.5px"><svg width="11" height="11" viewBox="0 0 11 11"><path d="M2,5 L4.5,7.5 L9,2.5" fill="none" stroke="#000" stroke-width="2"/></svg></span>
<span class="ln" style="top:27.0px;background:#6b6bc8"></span>
<span class="lt" style="top:21.0px;color:#10109a">mag_rcs_phi</span>
<span class="cb" style="top:38.3px"><svg width="11" height="11" viewBox="0 0 11 11"><path d="M2,5 L4.5,7.5 L9,2.5" fill="none" stroke="#000" stroke-width="2"/></svg></span>
<span class="ln" style="top:43.8px;background:#007800"></span>
<span class="lt" style="top:37.8px;color:#2a8a2a">mag_rcs_total</span>
</div>
<div class="abs" style="left:37px;top:765px;width:830px;height:1px;background:#d4d4d4"></div>
<div class="abs" style="left:37px;top:766px;width:830px;height:1px;background:#8a8a8a"></div>
<div class="abs" style="left:37px;top:767px;width:830px;height:1px;background:#a4a4a4"></div>
<div class="abs" style="left:38px;top:769px;width:828px;height:13px;background:#f0eeed"></div>
<div class="abs" style="left:37px;top:783px;width:830px;height:1px;background:#8c8c8c"></div>
<div class="abs" style="left:38px;top:785px;width:828px;height:16px;background:#f0eeed"></div>
<div class="th" style="left:37px;top:769px">X-Cursor</div>
<div class="abs" style="left:154px;top:785px;width:1px;height:16px;background:#d8d6d4"></div>
<div class="th" style="left:155px;top:769px">Y-Cursor</div>
<div class="abs" style="left:272px;top:785px;width:1px;height:16px;background:#d8d6d4"></div>
<div class="th" style="left:273px;top:769px">V-Caliper</div>
<div class="abs" style="left:390px;top:785px;width:1px;height:16px;background:#d8d6d4"></div>
<div class="th" style="left:391px;top:769px">H-Cal (dX)</div>
<div class="abs" style="left:508px;top:785px;width:1px;height:16px;background:#d8d6d4"></div>
<div class="th" style="left:509px;top:769px">H-Cal (1/dX)</div>
<div class="abs" style="left:626px;top:785px;width:1px;height:16px;background:#d8d6d4"></div>
<div class="th" style="left:627px;top:769px">Horz-D</div>
<div class="abs" style="left:744px;top:785px;width:1px;height:16px;background:#d8d6d4"></div>
<div class="th" style="left:745px;top:769px">Vert-D</div>
<div class="abs" style="left:862px;top:785px;width:1px;height:16px;background:#d8d6d4"></div>
<div class="abs" style="left:31px;top:806px;width:842px;height:1px;background:#a8a8a8"></div>
<div class="abs" style="left:30px;top:808px;width:843px;height:1px;background:#8c8c8c"></div>
<div id="status"><div class="abs" style="left:0;top:0;width:866px;height:22px;border:1px solid #fff"></div></div>
<svg class="ic" style="left:863px;top:821px" width="11" height="11" viewBox="0 0 11 11"><rect x="7" y="1" width="1" height="1" fill="#fff"/><rect x="8" y="2" width="1.6" height="1.6" fill="#a8a4a0"/><rect x="4" y="4" width="1" height="1" fill="#fff"/><rect x="5" y="5" width="1.6" height="1.6" fill="#a8a4a0"/><rect x="7" y="4" width="1" height="1" fill="#fff"/><rect x="8" y="5" width="1.6" height="1.6" fill="#a8a4a0"/><rect x="1" y="7" width="1" height="1" fill="#fff"/><rect x="2" y="8" width="1.6" height="1.6" fill="#a8a4a0"/><rect x="4" y="7" width="1" height="1" fill="#fff"/><rect x="5" y="8" width="1.6" height="1.6" fill="#a8a4a0"/><rect x="7" y="7" width="1" height="1" fill="#fff"/><rect x="8" y="8" width="1.6" height="1.6" fill="#a8a4a0"/></svg>
</body></html>
